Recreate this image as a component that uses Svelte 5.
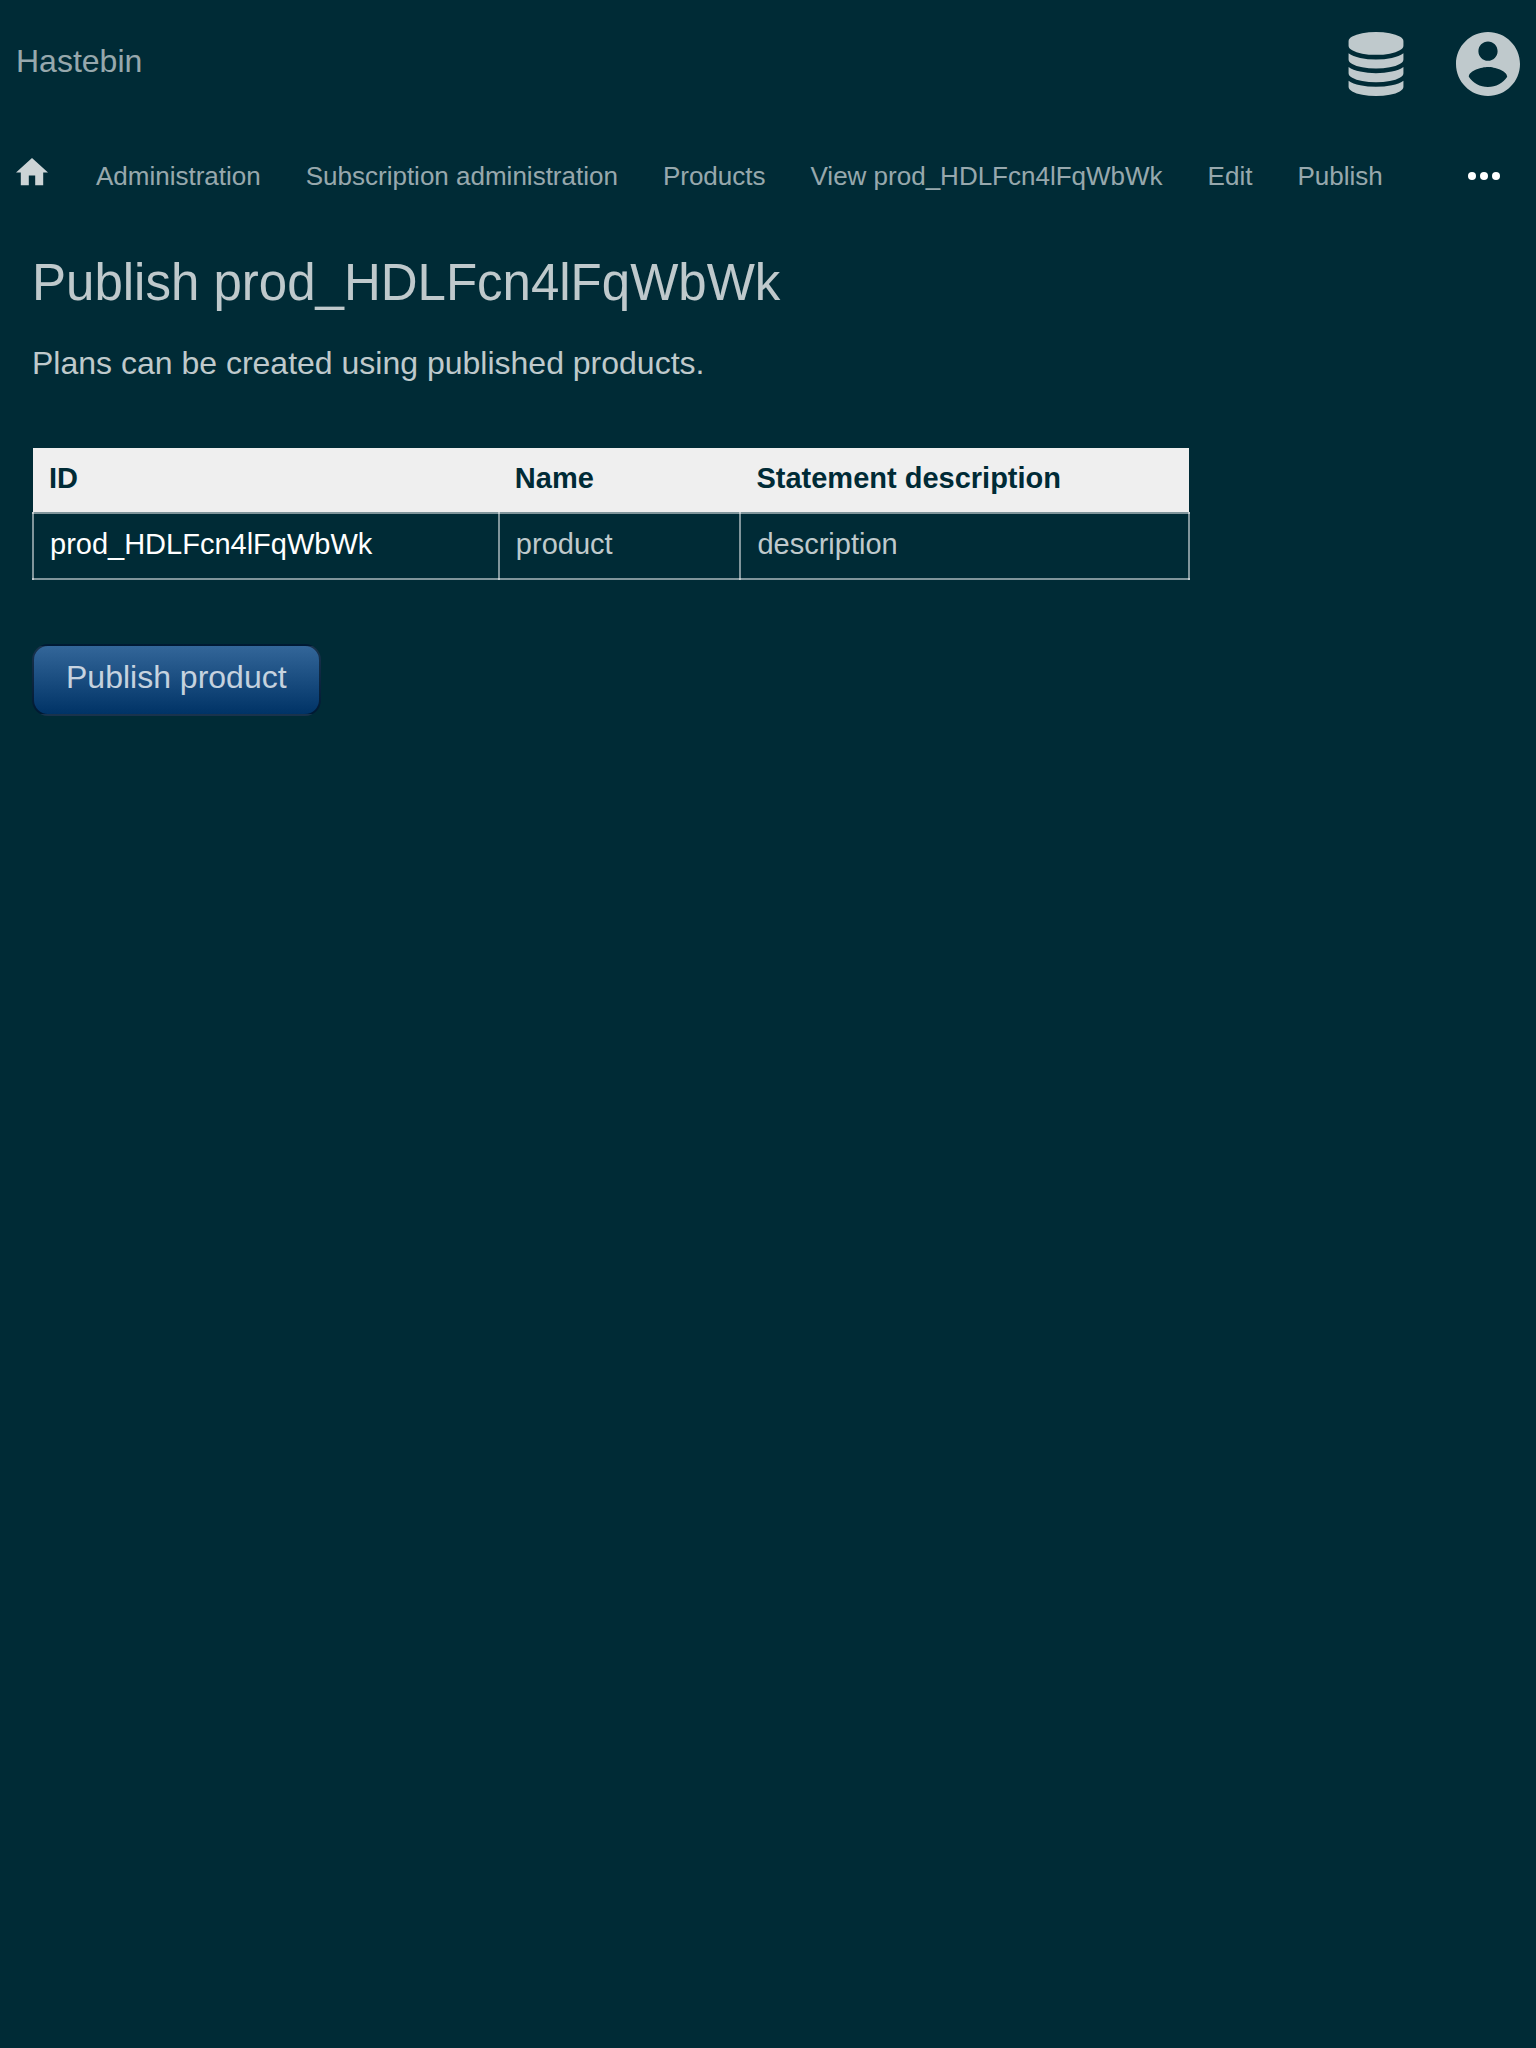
<script>
  const links = [
    'Administration',
    'Subscription administration',
    'Products',
    'View prod_HDLFcn4lFqWbWk',
    'Edit',
    'Publish',
  ];
  const columns = ['ID', 'Name', 'Statement description'];
  const product = { id: 'prod_HDLFcn4lFqWbWk', name: 'product', description: 'description' };
</script>

<header>
  <a class="brand" href="/">Hastebin</a>
  <div class="menus">
    <button type="button" aria-label="Administrator menu">
      <svg class="database" viewBox="0 0 1536 1792" aria-hidden="true">
        <path d="M768 768q237 0 443-43t325-127v170q0 69-103 128t-280 93.5-385 34.5-385-34.5-280-93.5-103-128v-170q119 84 325 127t443 43zm0 768q237 0 443-43t325-127v170q0 69-103 128t-280 93.5-385 34.5-385-34.5-280-93.5-103-128v-170q119 84 325 127t443 43zm0-384q237 0 443-43t325-127v170q0 69-103 128t-280 93.5-385 34.5-385-34.5-280-93.5-103-128v-170q119 84 325 127t443 43zm0-1152q208 0 385 34.5t280 93.5 103 128v128q0 69-103 128t-280 93.5-385 34.5-385-34.5-280-93.5-103-128v-128q0-69 103-128t280-93.5 385-34.5z" />
      </svg>
    </button>
    <button type="button" aria-label="Account menu">
      <svg class="account" viewBox="2 2 20 20" aria-hidden="true">
        <path d="M12 2C6.48 2 2 6.48 2 12s4.48 10 10 10 10-4.48 10-10S17.52 2 12 2zm0 3c1.66 0 3 1.34 3 3s-1.34 3-3 3-3-1.34-3-3 1.34-3 3-3zm0 14.2c-2.5 0-4.71-1.28-6-3.22.03-1.99 4-3.08 6-3.08 1.99 0 5.97 1.09 6 3.08-1.29 1.94-3.5 3.22-6 3.22z" />
      </svg>
    </button>
  </div>
</header>

<nav>
  <a class="home" href="/home" aria-label="Home">
    <svg viewBox="2 3 20 20" aria-hidden="true"><path d="M10 20v-6h4v6h5v-8h3L12 3 2 12h3v8z" /></svg>
  </a>
  <div class="links">
    {#each links as link}
      <a href="#{link}">{link}</a>
    {/each}
  </div>
  <button class="more" type="button" aria-label="More">
    <svg viewBox="4 9 16 6" aria-hidden="true">
      <circle cx="6" cy="12" r="2" /><circle cx="12" cy="12" r="2" /><circle cx="18" cy="12" r="2" />
    </svg>
  </button>
</nav>

<main>
  <h1>Publish {product.id}</h1>
  <p>Plans can be created using published products.</p>
  <table>
    <colgroup><col class="id" /><col class="name" /><col /></colgroup>
    <thead>
      <tr>
        {#each columns as column}<th scope="col">{column}</th>{/each}
      </tr>
    </thead>
    <tbody>
      <tr>
        <td><a href="#product">{product.id}</a></td>
        <td>{product.name}</td>
        <td>{product.description}</td>
      </tr>
    </tbody>
  </table>
  <form onsubmit={(event) => event.preventDefault()}>
    <button class="submit" type="submit">Publish product</button>
  </form>
</main>

<style>
  :global(body) {
    margin: 0;
    background: #002b36;
    color: rgba(255, 255, 255, 0.75);
    font-family: 'Liberation Sans', Arial, sans-serif;
    font-size: 32px;
  }

  a {
    color: inherit;
    text-decoration: none;
  }

  button {
    padding: 0;
    border: 0;
    background: none;
    color: inherit;
    font: inherit;
    cursor: pointer;
  }

  svg {
    display: block;
    fill: currentColor;
  }

  header {
    display: flex;
    justify-content: space-between;
    padding: 32px 16px;
  }

  .brand {
    color: rgba(255, 255, 255, 0.6);
    line-height: 58px;
  }

  .menus {
    display: flex;
    gap: 52px;
  }

  .database {
    width: 56px;
    height: 64px;
  }

  .account {
    width: 64px;
    height: 64px;
  }

  nav {
    display: flex;
    align-items: center;
    padding: 30px 36px 28px 16px;
    color: rgba(255, 255, 255, 0.6);
    font-size: 26px;
    line-height: 34px;
  }

  .home {
    padding-bottom: 4px;
    color: rgba(255, 255, 255, 0.8);
  }

  .home svg {
    width: 32px;
    height: 32px;
  }

  .links {
    display: flex;
    flex-wrap: wrap;
    flex: 1;
    gap: 0 45px;
    margin-left: 48px;
  }

  .more {
    color: #fff;
  }

  .more svg {
    width: 32px;
    height: 12px;
  }

  main {
    padding: 31px 32px;
  }

  h1 {
    margin: 0 0 31px;
    font-size: 51px;
    font-weight: 400;
    line-height: 60px;
  }

  p {
    margin: 0 0 66px;
    line-height: 38px;
  }

  table {
    width: 100%;
    max-width: 1158px;
    margin-bottom: 64px;
    border-collapse: collapse;
    font-size: 29px;
    line-height: 32px;
    text-align: left;
  }

  .id {
    width: 40.3%;
  }

  .name {
    width: 20.9%;
  }

  th {
    padding: 14px 16px 18px;
    background: #efefef;
    background-clip: padding-box;
    color: #002b36;
  }

  td {
    padding: 14px 16px 18px;
    border: 2px solid rgba(255, 255, 255, 0.5);
  }

  td a {
    color: #fff;
  }

  .submit {
    padding: 12px 32px 18px;
    border: 2px solid rgba(0, 0, 0, 0.5);
    border-radius: 16px;
    background: linear-gradient(#336699, #003366);
    line-height: 38px;
  }
</style>
